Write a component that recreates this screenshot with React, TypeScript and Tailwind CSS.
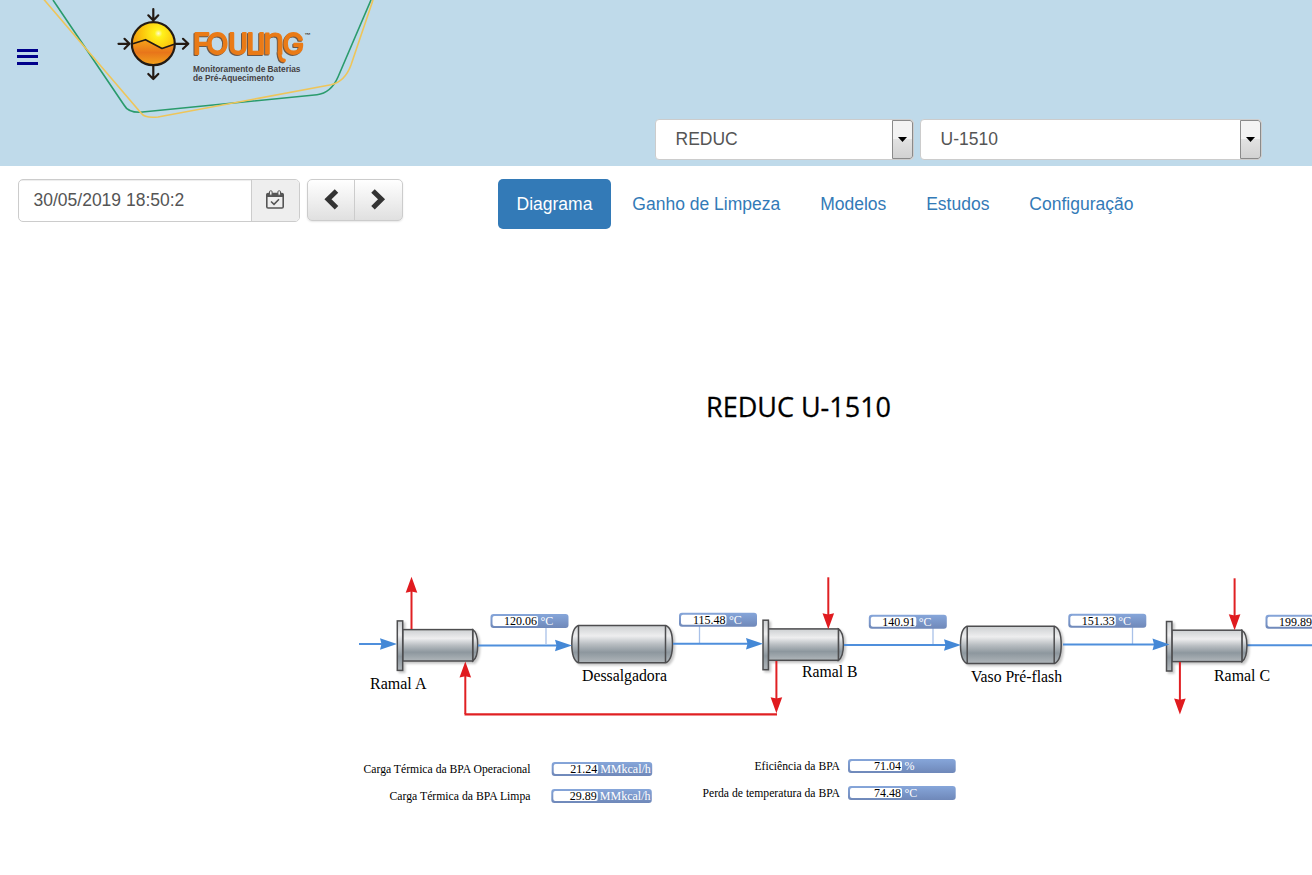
import React from "react";

type Point = { x: number; y: number };

function Logo() {
  return (
    <svg width="335" height="120" viewBox="43 0 335 120" className="shrink-0" fill="none">
      <defs>
        <radialGradient id="ball" cx="0.62" cy="0.26" r="0.75">
          <stop offset="0" stopColor="#fffbd0" />
          <stop offset="0.12" stopColor="#fff21c" />
          <stop offset="0.5" stopColor="#fcc60c" />
          <stop offset="1" stopColor="#ee8414" />
        </radialGradient>
        <linearGradient id="ballLow" x1="0" y1="0" x2="0" y2="1">
          <stop offset="0" stopColor="#f7a519" />
          <stop offset="0.5" stopColor="#e8751a" />
          <stop offset="1" stopColor="#f3a51c" />
        </linearGradient>
      </defs>
      <path d="M53 0 L124 105 Q128 112.5 140 112.3 L317 94.7 Q331 93 338 77 L371 0" stroke="#2a9b6c" strokeWidth="1.600" />
      <path d="M43.500 -1 L141 113 Q145 118.500 158 117 L331 84.800 Q345 81.500 351 65 L373 0" stroke="#eec55a" strokeWidth="1.600" />
      <circle cx="153.300" cy="43.700" r="21.500" fill="url(#ball)" />
      <path d="M132 44.300 L145.500 39.500 L162 48.500 L175 43.700 A21.500 21.500 0 0 1 132 44.300 Z" fill="url(#ballLow)" />
      <g stroke="#231a14" strokeWidth="2.200" strokeLinecap="round" strokeLinejoin="round">
        <circle cx="153.300" cy="43.700" r="21.500" />
        <path d="M132 44 L145.500 39.700 L162 48.500 L175 44" strokeWidth="1.700" />
        <path d="M153.300 9 V20 M148.300 15.300 L153.300 20.500 L158.300 15.300" />
        <path d="M153.300 66 V78.500 M148.300 74 L153.300 79 L158.300 74" />
        <path d="M118.500 43.800 H129 M124.500 38.800 L129.500 43.800 L124.500 48.800" />
        <path d="M176 43.800 H188 M183 38.800 L188.300 43.800 L183 48.800" />
      </g>
      <g stroke="#ea7b17" strokeLinejoin="round" className="[filter:drop-shadow(-1px_1px_0_#6c5848)]">
        <path d="M279.500 52 Q279.500 60.300 284 60.500" strokeWidth="3.800" strokeLinecap="round" />
        <text y="53.900" x="193 206.500 228.500 246.500 257.500 263 282.800" fontFamily="Roboto, sans-serif" fontSize="29.500" fontWeight="400" fill="#ea7b17" strokeWidth="1.900">
          F<tspan fontFamily="Inter, sans-serif" fontSize="28.500">O</tspan>ULI<tspan fontSize="39" strokeWidth="1">n</tspan><tspan fontFamily="Inter, sans-serif" fontSize="28.500">G</tspan>
        </text>
      </g>
      <text x="304.500" y="36.500" fontFamily="Liberation Sans, sans-serif" fontSize="6" fontWeight="700" fill="#40352e">™</text>
      <g fontFamily="Liberation Sans, sans-serif" fontSize="8.200" fontWeight="700" fill="#443f42">
        <text x="193" y="72.300" textLength="107.500" lengthAdjust="spacingAndGlyphs">Monitoramento de Baterias</text>
        <text x="193" y="81.200" textLength="81" lengthAdjust="spacingAndGlyphs">de Pré-Aquecimento</text>
      </g>
    </svg>
  );
}

function Select({ label, className }: { label: string; className: string }) {
  return (
    <div className={`flex h-[41px] overflow-hidden rounded-[4px] border border-[#ccc] bg-white ${className}`}>
      <span className="flex-1 pl-[19.5px] text-[17.5px] leading-[39px] text-[#555]">{label}</span>
      <span className="flex w-[21px] items-center justify-center rounded-r-[3px] border border-[#8a8a8a] bg-linear-to-b from-[#f3f3f3] from-50% via-[#e2e2e2] via-50% to-[#d2d2d2]">
        <svg width="9" height="5" viewBox="0 0 9 5"><path d="M0 0H9L4.500 5Z" fill="#000" /></svg>
      </span>
    </div>
  );
}

const tabs = ["Diagrama", "Ganho de Limpeza", "Modelos", "Estudos", "Configuração"];

function Toolbar() {
  return (
    <div className="flex h-[63px] items-start pl-[18px] pt-[13px]">
      <div className="flex h-[43px] w-[282px] overflow-hidden rounded-[5px] border border-[#ccc]">
        <span className="w-[232px] pl-[14.5px] text-[17.5px] leading-[40px] text-[#555] shadow-[inset_0_1px_1px_rgba(0,0,0,0.075)]">30/05/2019 18:50:2</span>
        <span className="flex flex-1 items-center justify-center border-l border-[#ccc] bg-[#eee]">
          <svg width="18" height="19" viewBox="0 0 18 19" fill="none" stroke="#555" className="-ml-px -mt-[2px]">
            <rect x="0.800" y="3.500" width="16.400" height="14.500" rx="1.300" strokeWidth="1.600" />
            <path d="M1 4.500H17V6.500H1Z" fill="#555" />
            <rect x="3.500" y="0.800" width="2.600" height="4.400" rx="1" fill="#eee" />
            <rect x="11.900" y="0.800" width="2.600" height="4.400" rx="1" fill="#eee" />
            <path d="M5 11.500L8 14.300L13 9.200" strokeWidth="1.600" />
          </svg>
        </span>
      </div>
      <div className="ml-[7px] flex h-[42px] w-[96px] rounded-[5px] border border-[#ccc] bg-linear-to-b from-white to-[#e0e0e0] shadow-[0_1px_2px_rgba(0,0,0,0.1)]">
        <span className="flex w-[47px] items-start justify-center border-r border-[#ccc] pt-[9px]">
          <svg width="15" height="21" viewBox="0 0 15 21"><path d="M12.500 2L4 10.300L12.500 18.700" fill="none" stroke="#333" strokeWidth="5" /></svg>
        </span>
        <span className="flex flex-1 items-start justify-center pr-px pt-[9px]">
          <svg width="15" height="21" viewBox="0 0 15 21"><path d="M2 2L10.500 10.300L2 18.700" fill="none" stroke="#333" strokeWidth="5" /></svg>
        </span>
      </div>
      <nav className="ml-[95px] flex gap-[3px] text-[17.5px] leading-[50px] text-[#337ab7]">
        {tabs.map((t, i) => (
          <a key={t} className={i === 0 ? "h-[50px] rounded-[5px] bg-[#337ab7] px-[18.5px] text-white" : "h-[50px] px-[18.46px]"}>{t}</a>
        ))}
      </nav>
    </div>
  );
}

function Exchanger({ x, y }: Point) {
  return (
    <g transform={`translate(${x} ${y})`} stroke="#4d4d4f" strokeWidth="1.500" className="[filter:drop-shadow(2px_2px_1px_rgba(0,0,0,0.22))]">
      <path d="M76 9.300 Q81 12 81 24.800 Q81 37.500 76 40.700 Z" fill="url(#metal)" />
      <rect x="6" y="9.200" width="70" height="31.400" fill="url(#metal)" />
      <rect x="0.600" y="0.500" width="5.400" height="49.500" fill="url(#metal)" />
    </g>
  );
}

function Vessel({ x, y }: Point) {
  return (
    <g transform={`translate(${x} ${y})`} stroke="#4d4d4f" strokeWidth="1.500" className="[filter:drop-shadow(2px_2px_1px_rgba(0,0,0,0.22))]">
      <path d="M7 0.500 Q0.500 3 0.500 19 Q0.500 35 7 37.700 H94.500 Q101.200 35 101.200 19 Q101.200 3 94.500 0.500 Z" fill="url(#metal)" />
      <path d="M7.200 0.500V37.700M94.200 0.500V37.700" />
    </g>
  );
}

type BadgeProps = Point & { w: number; inner: number; value: string; unit: string; unitX: number };

function Badge({ x, y, w, inner, value, unit, unitX }: BadgeProps) {
  return (
    <g transform={`translate(${x} ${y})`} fontSize="12">
      <rect width={w} height="14" rx="3" fill="url(#badge)" />
      <rect x="2" y="2" width={inner - 2} height="10" rx="2" fill="#fff" />
      <text x={inner - 1} y="11" textAnchor="end" fill="#000">{value}</text>
      <text x={unitX} y="11" fill="#fff">{unit}</text>
    </g>
  );
}

const temps = [
  { x: 490.5, y: 614, value: "120.06", pin: 546 },
  { x: 679, y: 612.7, value: "115.48", pin: 699.5 },
  { x: 868.8, y: 614.8, value: "140.91", pin: 933 },
  { x: 1068.3, y: 613.7, value: "151.33", pin: 1132.5 },
  { x: 1265.5, y: 614.7, value: "199.89", pin: 1330 },
];

const metrics = [
  { label: "Carga Térmica da BPA Operacional", lx: 363.5, lw: 167, ly: 773, x: 551.7, y: 762, w: 100.5, inner: 46.5, value: "21.24", unit: "MMkcal/h", unitX: 48.5 },
  { label: "Carga Térmica da BPA Limpa", lx: 389.5, lw: 141, ly: 800, x: 551.3, y: 789, w: 100.5, inner: 46.5, value: "29.89", unit: "MMkcal/h", unitX: 48.5 },
  { label: "Eficiência da BPA", lx: 754.5, lw: 85.5, ly: 770, x: 848, y: 759, w: 107.7, inner: 54, value: "71.04", unit: "%", unitX: 56.5 },
  { label: "Perda de temperatura da BPA", lx: 702.5, lw: 137.5, ly: 797, x: 848, y: 786, w: 107.7, inner: 54, value: "74.48", unit: "°C", unitX: 56.5 },
];

const flows = [
  { from: 359, to: 397, y: 644 },
  { from: 478, to: 572, y: 645.5 },
  { from: 673, to: 763, y: 643.8 },
  { from: 844, to: 961, y: 645 },
  { from: 1063, to: 1169.5, y: 644.4 },
];

const streams = [
  { x: 411.5, from: 629, to: 576.8 },
  { x: 465.3, from: 714, to: 661.5 },
  { x: 776.4, from: 661, to: 713.3 },
  { x: 828.3, from: 577.3, to: 629.3 },
  { x: 1234.6, from: 578.3, to: 630.3 },
  { x: 1179.9, from: 662, to: 714.5 },
];

const names = [
  { t: "Ramal A", x: 370, y: 689, w: 56.5 },
  { t: "Dessalgadora", x: 582, y: 681, w: 85 },
  { t: "Ramal B", x: 802, y: 677, w: 55.5 },
  { t: "Vaso Pré-flash", x: 971, y: 682, w: 91 },
  { t: "Ramal C", x: 1214, y: 681, w: 56 },
];

function Diagram() {
  return (
    <svg width="1312" height="646" viewBox="0 229 1312 646" fontFamily="Liberation Serif, serif" className="block">
      <defs>
        <linearGradient id="metal" x1="0" y1="0" x2="0" y2="1">
          <stop offset="0" stopColor="#cdd0d2" />
          <stop offset="0.28" stopColor="#eeeeef" />
          <stop offset="0.5" stopColor="#b9bec2" />
          <stop offset="0.72" stopColor="#8d979e" />
          <stop offset="1" stopColor="#b0b6ba" />
        </linearGradient>
        <linearGradient id="badge" x1="0" y1="0" x2="0" y2="1">
          <stop offset="0" stopColor="#86a6da" />
          <stop offset="1" stopColor="#6f88b9" />
        </linearGradient>
      </defs>
      <text x="706" y="417" fontFamily="Open Sans, sans-serif" fontSize="28" stroke="#000" strokeWidth="0.300" textLength="185" lengthAdjust="spacingAndGlyphs">REDUC U-1510</text>
      <path d="M1247 645.300H1312" stroke="#4f8fdc" strokeWidth="2" />
      {temps.map((b) => (
        <path key={b.value} d={`M${b.pin} ${b.y + 13}V644`} stroke="#a9c1e8" strokeWidth="1.300" />
      ))}
      <Exchanger x={396.7} y={620.4} />
      <Exchanger x={762.4} y={619.7} />
      <Exchanger x={1165.9} y={621} />
      <Vessel x={571.3} y={625} />
      <Vessel x={960} y={625.8} />
      {flows.map((f) => (
        <g key={f.from}>
          <path d={`M${f.from} ${f.y}H${f.to - 13}`} stroke="#4f8fdc" strokeWidth="2" />
          <path d={`M${f.to} ${f.y}L${f.to - 17} ${f.y - 5.8}L${f.to - 15.5} ${f.y}L${f.to - 17} ${f.y + 5.8}Z`} fill="#4488d6" />
        </g>
      ))}
      <path d="M464.500 714.400H777" stroke="#e02023" strokeWidth="2.200" />
      {streams.map((s) => {
        const d = Math.sign(s.to - s.from);
        return (
          <g key={s.x}>
            <path d={`M${s.x} ${s.from}V${s.to - 12 * d}`} stroke="#e02023" strokeWidth="2" />
            <path d={`M${s.x} ${s.to}L${s.x - 5.8} ${s.to - 16 * d}L${s.x} ${s.to - 14.8 * d}L${s.x + 5.8} ${s.to - 16 * d}Z`} fill="#e01b1f" />
          </g>
        );
      })}
      {temps.map((b) => (
        <Badge key={b.value} x={b.x} y={b.y} w={78} inner={47.5} value={b.value} unit="°C" unitX={50} />
      ))}
      {metrics.map((m) => (
        <g key={m.label}>
          <text x={m.lx} y={m.ly} fontSize="12" textLength={m.lw} lengthAdjust="spacingAndGlyphs">{m.label}</text>
          <Badge x={m.x} y={m.y} w={m.w} inner={m.inner} value={m.value} unit={m.unit} unitX={m.unitX} />
        </g>
      ))}
      {names.map((n) => (
        <text key={n.t} x={n.x} y={n.y} fontSize="16" textLength={n.w} lengthAdjust="spacingAndGlyphs">{n.t}</text>
      ))}
    </svg>
  );
}

export default function App() {
  return (
    <div className="flex h-[875px] w-[1312px] flex-col overflow-hidden bg-white font-['Liberation_Sans',Arial,sans-serif]">
      <header className="flex h-[166px] items-start bg-[#bfdaea]">
        <div className="ml-[17px] mt-[49px] flex w-[21px] flex-col gap-[3.3px]">
          <span className="h-[3px] bg-[#00008b]" />
          <span className="h-[3px] bg-[#00008b]" />
          <span className="h-[3px] bg-[#00008b]" />
        </div>
        <div className="ml-[5px]"><Logo /></div>
        <div className="ml-auto mr-[50px] mt-[119px] flex gap-[6px]">
          <Select label="REDUC" className="w-[259px]" />
          <Select label="U-1510" className="w-[342px]" />
        </div>
      </header>
      <Toolbar />
      <Diagram />
    </div>
  );
}
